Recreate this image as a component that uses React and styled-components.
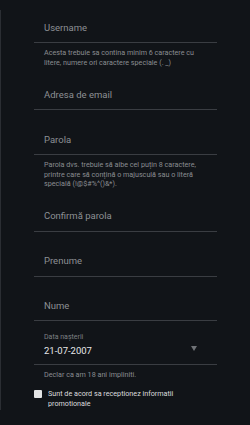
import styled, { createGlobalStyle } from "styled-components";

const GlobalStyle = createGlobalStyle`
  html, body {
    margin: 0;
    padding: 0;
    background: #111418;
  }
  body {
    font-family: Roboto, "Noto Sans", sans-serif;
    -webkit-font-smoothing: antialiased;
  }
`;

const Page = styled.div`
  width: 250px;
  height: 425px;
  background: #111418;
  padding-top: 10px;
  box-sizing: border-box;
`;

const Panel = styled.div`
  border-left: 1px solid #2b2e33;
  height: 400px;
  padding: 0 33px 0 33px;
  box-sizing: border-box;
`;

const Field = styled.div`
  padding: ${props => props.top || 23.3}px 10px 8.4px 10px;
  border-bottom: 1px solid #3a3d42;
  display: flex;
  align-items: center;
`;

const Placeholder = styled.span`
  flex: 1;
  font-size: 9.5px;
  line-height: 12px;
  color: #8d9094;
`;

const Helper = styled.p`
  margin: 5px 0 0 0;
  padding: 0 10px;
  font-size: 7.2px;
  line-height: 9.6px;
  color: #8a8d91;
`;

const DateField = styled.div`
  padding: 12px 10px 7px 10px;
  border-bottom: 1px solid #3a3d42;
  display: flex;
  align-items: flex-end;
`;

const DateBlock = styled.div`
  flex: 1;
  display: flex;
  flex-direction: column;
  gap: 2.5px;
`;

const DateLabel = styled.span`
  font-size: 7px;
  line-height: 9px;
  color: #7d8084;
`;

const DateValue = styled.span`
  font-size: 9.5px;
  line-height: 12px;
  color: #e6e7e8;
`;

const Arrow = styled.span`
  width: 0;
  height: 0;
  border-left: 3.5px solid transparent;
  border-right: 3.5px solid transparent;
  border-top: 5px solid #6f7276;
  margin: 0 10px 6px 0;
`;

const CheckRow = styled.label`
  display: flex;
  align-items: flex-start;
  gap: 6px;
  margin-top: 10px;
`;

const Box = styled.span`
  width: 8px;
  height: 8px;
  margin-top: 1px;
  flex-shrink: 0;
  background: #e3e4e5;
  border-radius: 1px;
`;

const CheckText = styled.span`
  font-size: 7.2px;
  line-height: 9.5px;
  color: #dcdddf;
`;

export default function App() {
  return (
    <Page>
      <GlobalStyle />
      <Panel>
        <Field top={12}>
          <Placeholder>Username</Placeholder>
        </Field>
        <Helper>
          Acesta trebuie sa contina minim 6 caractere cu litere, numere ori caractere speciale (. _)
        </Helper>
        <Field top={21.5}>
          <Placeholder>Adresa de email</Placeholder>
        </Field>
        <Field>
          <Placeholder>Parola</Placeholder>
        </Field>
        <Helper>
          Parola dvs. trebuie să aibe cel puțin 8 caractere, printre care să conțină o majusculă sau o literă specială (!@$#%^()&*).
        </Helper>
        <Field top={21.5}>
          <Placeholder>Confirmă parola</Placeholder>
        </Field>
        <Field>
          <Placeholder>Prenume</Placeholder>
        </Field>
        <Field>
          <Placeholder>Nume</Placeholder>
        </Field>
        <DateField>
          <DateBlock>
            <DateLabel>Data nașterii</DateLabel>
            <DateValue>21-07-2007</DateValue>
          </DateBlock>
          <Arrow />
        </DateField>
        <Helper>Declar ca am 18 ani impliniti.</Helper>
        <CheckRow>
          <Box />
          <CheckText>Sunt de acord sa receptionez informatii promotionale</CheckText>
        </CheckRow>
      </Panel>
    </Page>
  );
}
